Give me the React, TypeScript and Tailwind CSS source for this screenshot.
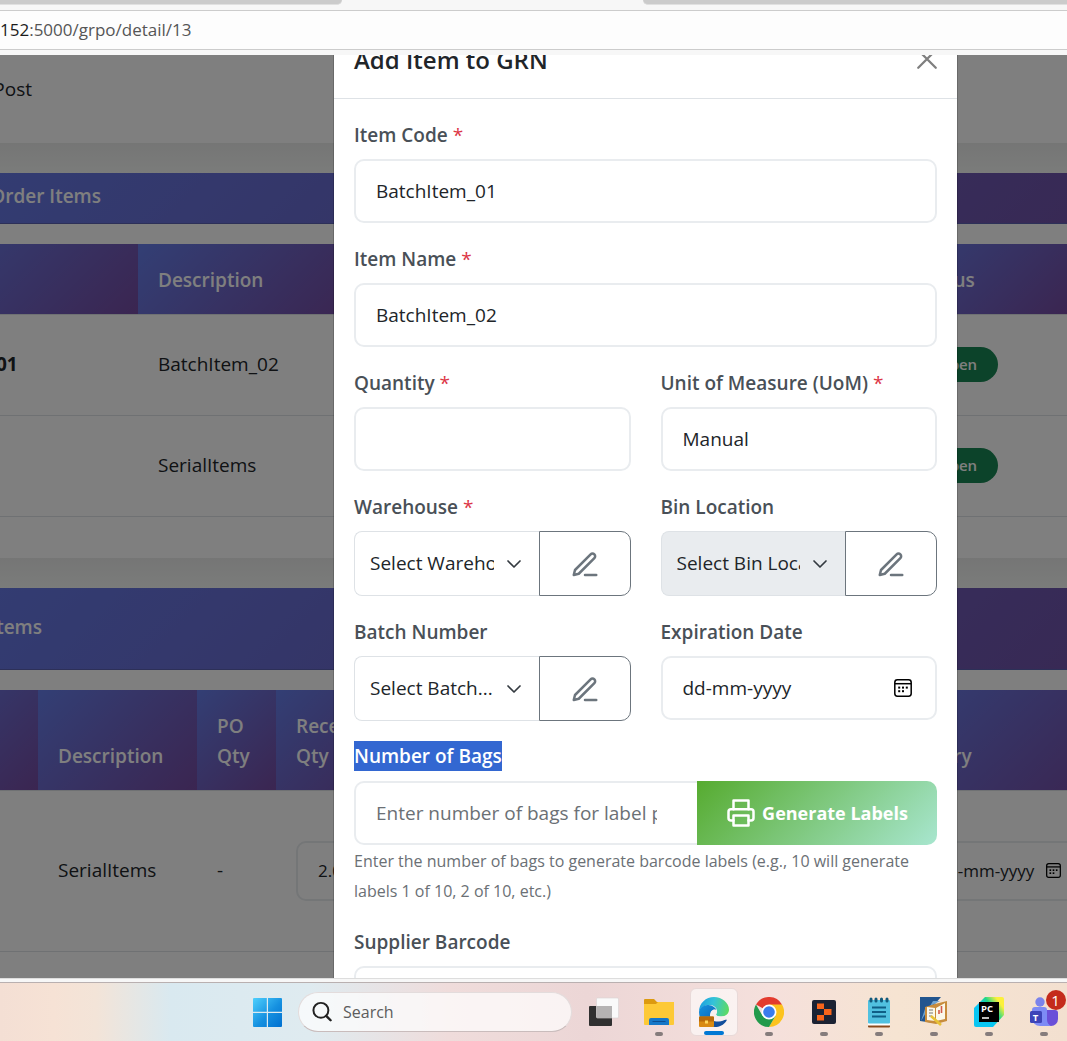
import type { ReactNode } from "react";

const FONT = "font-['Open_Sans','Noto_Sans',sans-serif]";
const BRAND = "bg-[linear-gradient(135deg,#667eea_0%,#764ba2_100%)]";
const BANNER = "bg-[linear-gradient(135deg,#6678e4_0%,#7053aa_100%)]";
const INPUT =
  "w-full min-w-0 h-16 rounded-[10px] border-2 border-[#e9ecef] bg-white px-5 text-[19px] text-[#212529] outline-none placeholder:text-[#6b7075]";

function PencilIcon() {
  return (
    <svg viewBox="0 0 24 24" className="size-[30px]" fill="none" stroke="currentColor" strokeWidth="2" strokeLinecap="round" strokeLinejoin="round">
      <path d="M12 20h9" />
      <path d="M16.5 3.5a2.121 2.121 0 0 1 3 3L7 19l-4 1 1-4L16.5 3.5z" />
    </svg>
  );
}

function PrinterIcon() {
  return (
    <svg viewBox="0 0 24 24" className="size-[30px]" fill="none" stroke="currentColor" strokeWidth="2" strokeLinecap="round" strokeLinejoin="round">
      <polyline points="6 9 6 2 18 2 18 9" />
      <path d="M6 18H4a2 2 0 0 1-2-2v-5a2 2 0 0 1 2-2h16a2 2 0 0 1 2 2v5a2 2 0 0 1-2 2h-2" />
      <rect x="6" y="14" width="12" height="8" />
    </svg>
  );
}

function CalendarIcon({ className }: { className: string }) {
  return (
    <svg viewBox="0 0 18 18" className={className} fill="none" stroke="currentColor" strokeWidth="1.5">
      <rect x="0.8" y="0.8" width="16.4" height="16.4" rx="2.6" />
      <path d="M1 4.7h16" />
      <g fill="currentColor" stroke="none">
        <rect x="4.2" y="11.2" width="2" height="2" />
        <rect x="8" y="11.2" width="2" height="2" />
        <rect x="4.2" y="7.6" width="2" height="2" />
        <rect x="8" y="7.6" width="2" height="2" />
        <rect x="11.8" y="7.6" width="2" height="2" />
      </g>
    </svg>
  );
}

function Label({ htmlFor, required, children }: { htmlFor: string; required?: boolean; children: ReactNode }) {
  return (
    <label htmlFor={htmlFor} className="mb-2 block h-8 text-[19px] leading-8 font-semibold whitespace-nowrap text-[#495057]">
      {children}
      {required && <span className="font-normal text-[#dc3545]"> *</span>}
    </label>
  );
}

function PickField({ id, label, option, required, disabled }: { id: string; label: string; option: string; required?: boolean; disabled?: boolean }) {
  return (
    <div className="min-w-0">
      <Label htmlFor={id} required={required}>{label}</Label>
      <div className="flex h-[65px]">
        <div className="relative min-w-0 flex-1">
          <select
            id={id}
            disabled={disabled}
            className={`h-full w-full appearance-none rounded-l-lg border border-r-0 border-[#dee2e6] pr-[45px] pl-[15px] text-[19px] text-[#212529] opacity-100 outline-none ${disabled ? "bg-[#e9ecef]" : "bg-white"}`}
          >
            <option>{option}</option>
          </select>
          <svg viewBox="0 0 16 16" className="pointer-events-none absolute top-1/2 right-[17px] size-4 -translate-y-1/2" fill="none" stroke="#343a40" strokeWidth="1.7" strokeLinecap="round" strokeLinejoin="round">
            <path d="m2 5 6 6 6-6" />
          </svg>
        </div>
        <button type="button" aria-label={`Enter ${label} manually`} className="flex w-[92px] items-center justify-center rounded-r-[10px] border border-[#6c757d] pt-0.5 text-[#6c757d]">
          <PencilIcon />
        </button>
      </div>
    </div>
  );
}

function TableHead({ cells, className }: { cells: string[]; className: string }) {
  return (
    <thead>
      <tr className={className}>
        {cells.map((c, i) => (
          <th key={i} className={`${BRAND} border-b border-[#dee2e6] px-5 pb-[19px] text-left align-bottom text-[19px] leading-[30px] font-semibold text-white`}>
            {c}
          </th>
        ))}
      </tr>
    </thead>
  );
}

function Shadow() {
  return <div className="h-[30px] shrink-0 bg-[linear-gradient(180deg,#ebeceb,#f6f8f6)]" />;
}

function PageBehind() {
  return (
    <div className="flex h-full flex-col bg-white text-[19px] text-[#212529]">
      <div className="h-[88px] shrink-0 pt-[19px]">
        <p className="flex w-8 justify-end leading-[30px]">Post</p>
      </div>
      <Shadow />
      <section className="h-[385px] shrink-0">
        <h2 className={`${BANNER} h-[51px] border-b border-[#5a60b0] pt-2`}>
          <span className="flex w-[101px] justify-end leading-[30px] font-semibold whitespace-nowrap text-white">Order Items</span>
        </h2>
        <table className="mt-5 -ml-20 w-[calc(100%+80px)] table-fixed border-collapse">
          <colgroup>
            <col className="w-[218px]" />
            <col className="w-[212px]" />
            <col />
            <col className="w-[170px]" />
          </colgroup>
          <TableHead cells={["", "Description", "", "Status"]} className="h-[70px]" />
          <tbody>
            {[
              ["01", "BatchItem_02"],
              ["", "SerialItems"],
            ].map(([code, name]) => (
              <tr key={name} className="h-[101px] border-b border-[#dee2e6]">
                <td className="pl-[76px] font-bold">{code}</td>
                <td className="px-5">{name}</td>
                <td />
                <td className="px-5">
                  <span className="flex h-[35px] w-[81px] items-center justify-center rounded-full bg-[#198754] text-[15px] font-semibold text-white">Open</span>
                </td>
              </tr>
            ))}
          </tbody>
        </table>
      </section>
      <Shadow />
      <section className="shrink-0">
        <h2 className={`${BANNER} flex h-[82px] items-center border-b border-[#5a60b0] pb-1`}>
          <span className="flex w-[42px] justify-end leading-[30px] font-semibold text-white">Items</span>
        </h2>
        <table className="mt-5 -ml-20 w-[calc(100%+116px)] table-fixed border-collapse">
          <colgroup>
            <col className="w-[118px]" />
            <col className="w-[159px]" />
            <col className="w-[79px]" />
            <col className="w-[120px]" />
            <col />
            <col className="w-[208px]" />
          </colgroup>
          <TableHead cells={["", "Description", "PO Qty", "Received Qty", "", "Expiry"]} className="h-[100px]" />
          <tbody>
            <tr className="h-[161px] border-b border-[#dee2e6]">
              <td />
              <td className="px-5">SerialItems</td>
              <td className="px-5">-</td>
              <td className="px-5">
                <input aria-label="Received quantity" defaultValue="2.000" className="h-[60px] w-full rounded-[10px] border-2 border-[#e9ecef] px-5 text-[17px]" />
              </td>
              <td />
              <td className="px-5">
                <div className="flex h-[60px] items-center justify-between rounded-[10px] border-2 border-[#e9ecef] px-5">
                  <input aria-label="Expiry date" placeholder="dd-mm-yyyy" className="w-[104px] text-[17px] outline-none placeholder:text-[#212529]" />
                  <CalendarIcon className="size-[15px] text-black" />
                </div>
              </td>
            </tr>
          </tbody>
        </table>
      </section>
    </div>
  );
}

function Modal() {
  return (
    <div role="dialog" aria-label="Add Item to GRN" className="flex-1 bg-white shadow-[0_0_0_1px_rgba(0,0,0,0.17)]">
      <header className="flex h-11 items-start justify-between border-b border-[#dee2e6] px-5">
        <h1 className="-mt-3 text-2xl leading-[34px] font-semibold text-[#212529]">Add Item to GRN</h1>
        <button type="button" aria-label="Close" className="-mt-1.5 size-5 text-[#7f7f7f]">
          <svg viewBox="0 0 16 16" className="size-5" fill="none" stroke="currentColor" strokeWidth="1.8" strokeLinecap="round">
            <path d="M1 1l14 14M15 1L1 15" />
          </svg>
        </button>
      </header>
      <form className="grid grid-cols-2 gap-x-[30px] gap-y-5 p-5" onSubmit={(e) => e.preventDefault()}>
        <div className="col-span-2">
          <Label htmlFor="code" required>Item Code</Label>
          <input id="code" defaultValue="BatchItem_01" className={INPUT} />
        </div>
        <div className="col-span-2">
          <Label htmlFor="name" required>Item Name</Label>
          <input id="name" defaultValue="BatchItem_02" className={INPUT} />
        </div>
        <div>
          <Label htmlFor="qty" required>Quantity</Label>
          <input id="qty" className={INPUT} />
        </div>
        <div>
          <Label htmlFor="uom" required>Unit of Measure (UoM)</Label>
          <input id="uom" defaultValue="Manual" className={INPUT} />
        </div>
        <PickField id="warehouse" label="Warehouse" option="Select Warehouse..." required />
        <PickField id="bin" label="Bin Location" option="Select Bin Location..." disabled />
        <PickField id="batch" label="Batch Number" option="Select Batch..." />
        <div>
          <Label htmlFor="expiry">Expiration Date</Label>
          <div className="relative">
            <input id="expiry" placeholder="dd-mm-yyyy" className={`${INPUT} placeholder:text-[#212529]`} />
            <button type="button" aria-label="Open calendar" className="absolute top-[23px] right-[25px] text-black">
              <CalendarIcon className="size-[18px]" />
            </button>
          </div>
        </div>
        <div className="col-span-2">
          <label htmlFor="bags" className="mb-2.5 block w-fit bg-[#3367d1] text-[19px] leading-[30px] font-semibold text-white">
            Number of Bags
          </label>
          <div className="flex">
            <input
              id="bags"
              placeholder="Enter number of bags for label printing"
              className="h-16 min-w-0 flex-1 rounded-l-[10px] border-2 border-r-0 border-[#e9ecef] pr-10 pl-5 text-[19px] outline-none placeholder:text-[#6b7075]"
            />
            <button type="button" className="flex w-60 items-center justify-center gap-1.5 rounded-r-[10px] bg-[linear-gradient(135deg,#56ab2f_0%,#a8e6cf_100%)] text-[18px] font-bold text-white">
              <PrinterIcon />
              Generate Labels
            </button>
          </div>
          <p className="mt-px text-[16px] leading-[30px] text-[#6b7075]">
            Enter the number of bags to generate barcode labels (e.g., 10 will generate labels 1 of 10, 2 of 10, etc.)
          </p>
        </div>
        <div className="col-span-2">
          <Label htmlFor="supplier">Supplier Barcode</Label>
          <input id="supplier" className={INPUT} />
        </div>
      </form>
    </div>
  );
}

function StartIcon() {
  return (
    <svg viewBox="0 0 29 29" className="size-[29px]">
      <defs>
        <linearGradient id="win" x1="0" y1="0" x2="29" y2="29" gradientUnits="userSpaceOnUse">
          <stop offset="0" stopColor="#4fd0fd" />
          <stop offset="0.55" stopColor="#1590e0" />
          <stop offset="1" stopColor="#0070d0" />
        </linearGradient>
      </defs>
      <path fill="url(#win)" d="M1 0h12.8v13.8H0V1a1 1 0 0 1 1-1zM15 0h13a1 1 0 0 1 1 1v12.8H15zM0 15h13.8v14H1a1 1 0 0 1-1-1zM15 15h14v13a1 1 0 0 1-1 1H15z" />
    </svg>
  );
}

function TaskViewIcon() {
  return (
    <svg viewBox="0 0 30 30" className="size-[30px]">
      <rect x="0" y="9" width="23" height="20" rx="1" fill="#303030" />
      <rect x="7.5" y="1" width="22" height="20" rx="1" fill="#fafafa" stroke="#d8d4d4" strokeWidth="0.6" />
      <path d="M8 9h15v12H8z" fill="#b5b3b3" />
    </svg>
  );
}

function FolderIcon() {
  return (
    <svg viewBox="0 0 30 28" className="h-7 w-[30px]">
      <path d="M0 2a1 1 0 0 1 1-1h9l3 3h16a1 1 0 0 1 1 1v6H0z" fill="#dc9a10" />
      <path d="M0 6h12l2-2h16v22a1 1 0 0 1-1 1H1a1 1 0 0 1-1-1z" fill="#fdc936" />
      <path d="M5 27v-5a2 2 0 0 1 2-2h16a2 2 0 0 1 2 2v5z" fill="#1577c8" />
      <path d="M8.500 23.500h13" stroke="#0b4f93" strokeWidth="1" />
    </svg>
  );
}

function EdgeIcon() {
  return (
    <svg viewBox="0 0 30 30" className="size-[30px]">
      <defs>
        <linearGradient id="edgeTop" x1="0" y1="6" x2="30" y2="14" gradientUnits="userSpaceOnUse">
          <stop offset="0" stopColor="#1c9ee0" />
          <stop offset="0.45" stopColor="#35c3d8" />
          <stop offset="1" stopColor="#5fdc5c" />
        </linearGradient>
        <linearGradient id="edgeLow" x1="0" y1="10" x2="16" y2="28" gradientUnits="userSpaceOnUse">
          <stop offset="0" stopColor="#1590dc" />
          <stop offset="1" stopColor="#0b5eb5" />
        </linearGradient>
      </defs>
      <path d="M0 15C0 6 7 0 15 0s15 6 15 12.500c0 4-3 7-8 7-3.500 0-5-1-5-2 0-1 1.500-1.500 1-4C17.500 10 14 8 10 8 5 8 1 11 0 15z" fill="url(#edgeTop)" />
      <path d="M0 15c.5-4.500 5-7.500 9.500-7 4 .3 7 2.500 8 5-3-1.500-6.500 1-6.500 5.500 0 6 4 9.500 9 10C11 32 0 26 0 15z" fill="url(#edgeLow)" />
      <path d="M11 18.500c0 5 5 6.500 9 6 3-.3 5-1.500 7-2 .8 0 1 .5.500 1.200C25 28 20 30 16 30 11 29 9 23 11 18.500z" fill="#124f9c" />
      <path d="M12.500 14.500c1.500-2.500 5.500-2 5.500.5 0 1.200-1 2-.8 2.800.3 1.400 3 2 6 1.700 2 0 3 .5 4.500 2-3 2.500-8 3-11 1.500-3.500-1.500-5.500-5.500-4.200-8.500z" fill="#f9efee" />
      <rect x="0" y="19.500" width="15" height="10.500" rx="1" fill="#d98a12" />
      <path d="M0 20.500a1 1 0 0 1 1-1h13a1 1 0 0 1 1 1v4H0z" fill="#b86a0a" />
      <rect x="6" y="23.500" width="3" height="3" fill="#ffd65a" />
    </svg>
  );
}

function ChromeIcon() {
  return (
    <svg viewBox="0 0 48 48" className="size-[30px]">
      <path d="M24 24 3.200 12A24 24 0 0 1 44.800 12z" fill="#e33b2e" />
      <path d="M24 12h20.800A24 24 0 0 1 24 48l10.400-18z" fill="#fcc31e" />
      <path d="M3.200 12 13.600 30 34.400 30 24 48A24 24 0 0 1 3.200 12z" fill="#229a4b" />
      <circle cx="24" cy="24" r="12" fill="#fff" />
      <circle cx="24" cy="24" r="9.300" fill="#3a7cec" />
    </svg>
  );
}

function BlocksIcon() {
  return (
    <svg viewBox="0 0 24 24" className="size-6">
      <rect width="24" height="24" rx="2" fill="#1b2233" />
      <path d="M5 3.500h7v5.500H5zM12 9h7.500v6H12zM5 15h7v5.500H5z" fill="#f8641a" />
    </svg>
  );
}

function NotepadIcon() {
  return (
    <svg viewBox="0 0 24 31" className="h-[31px] w-6">
      <rect x="1" y="27" width="22" height="3.500" rx="1" fill="#8a4a1c" />
      <rect x="1" y="25" width="22" height="3.500" fill="#fff" />
      <rect x="1" y="3" width="22" height="23.500" rx="1" fill="#51c1e0" />
      <path d="M5 10.500h14M5 15h14M5 19.500h14" stroke="#0f5f86" strokeWidth="1.800" />
      <path d="M4 2v2M9 2v2M14.500 2v2M20 2v2" stroke="#125a7c" strokeWidth="3" strokeLinecap="round" />
    </svg>
  );
}

function BookIcon() {
  return (
    <svg viewBox="0 0 30 30" className="size-[30px]">
      <path d="M1 0h21l-7 8v18L1 24z" fill="#21558f" />
      <path d="M2 24 14 4h7L6 12z" fill="#6fa4d0" />
      <path d="M6 10 16 7l12-3v20l-11 3-11-2z" fill="#c78c3c" />
      <path d="m8 10 8 1v13l-8-1zM17 11l9-5v16l-9 2z" fill="#fbf8ea" />
      <path d="M10 13h4M10 16h4M10 19h3" stroke="#777" strokeWidth="1" />
      <path d="M20 17v-4M22.500 16V9" stroke="#d25a4c" strokeWidth="1.600" />
      <path d="m12 19 10 9" stroke="#e8c236" strokeWidth="2.600" />
    </svg>
  );
}

function PyCharmIcon() {
  return (
    <svg viewBox="0 0 30 30" className="size-[30px]">
      <defs>
        <linearGradient id="pc" x1="6" y1="18" x2="27" y2="3" gradientUnits="userSpaceOnUse">
          <stop offset="0.25" stopColor="#09c6f2" />
          <stop offset="0.55" stopColor="#21d789" />
          <stop offset="0.9" stopColor="#fcf03a" />
        </linearGradient>
      </defs>
      <path d="M11 0h17a2 2 0 0 1 2 2v16L19 30H2a2 2 0 0 1-2-2V11z" fill="url(#pc)" />
      <rect x="5" y="5" width="20" height="20" fill="#000" />
      <path d="M8 21h7" stroke="#fff" strokeWidth="1.500" />
      <text x="7" y="14.500" fontSize="9.500" fontWeight="700" fill="#fff">PC</text>
    </svg>
  );
}

function TeamsIcon() {
  return (
    <svg viewBox="0 0 30 30" className="size-[30px]">
      <circle cx="11" cy="5" r="4.700" fill="#7b83eb" />
      <path d="M17 13h9a3 3 0 0 1 3 3v6a7 7 0 0 1-7 7h-5z" fill="#6a4fd8" />
      <path d="M3 13a3 3 0 0 1 3-3h9a3 3 0 0 1 3 3v10c0 3 2 5 4 6H11a8 8 0 0 1-8-8z" fill="#7d8bf5" />
      <rect x="1" y="14" width="12" height="12" rx="1.500" fill="#3d44b8" />
      <text x="3.800" y="23.500" fontSize="9.500" fontWeight="700" fill="#fff">T</text>
    </svg>
  );
}

const APPS = [
  { name: "Task view", icon: <TaskViewIcon />, mark: "none" },
  { name: "File Explorer", icon: <FolderIcon />, mark: "open" },
  { name: "Edge", icon: <EdgeIcon />, mark: "active" },
  { name: "Chrome", icon: <ChromeIcon />, mark: "open" },
  { name: "Blocks", icon: <BlocksIcon />, mark: "open" },
  { name: "Notepad", icon: <NotepadIcon />, mark: "open" },
  { name: "Registry", icon: <BookIcon />, mark: "open" },
  { name: "PyCharm", icon: <PyCharmIcon />, mark: "open" },
  { name: "Teams", icon: <TeamsIcon />, mark: "open", badge: "1" },
];

function Taskbar() {
  return (
    <nav className="flex h-[59px] shrink-0 items-center overflow-hidden border-t border-[#b9b0b0] bg-[linear-gradient(90deg,#f4dfd4_0%,#f6e2d5_5%,#f3e4d8_9%,#d9e9f0_16%,#dfebf0_29%,#efdcdb_42%,#ecd6d6_55%,#f5e0dc_72%,#f6e4d2_84%,#f3e0d0_100%)] pl-[253px]">
      <button type="button" aria-label="Start" className="shrink-0">
        <StartIcon />
      </button>
      <label className="ml-4 flex h-10 w-[274px] shrink-0 items-center gap-2.5 rounded-full border border-b-[#c9bcbc] border-[#e3dcdc] bg-white/70 pl-3">
        <svg viewBox="0 0 20 20" className="size-[22px]" fill="none" stroke="#222" strokeWidth="1.800" strokeLinecap="round">
          <circle cx="9" cy="8.500" r="6.800" />
          <path d="m13.800 13.500 4 4" strokeWidth="2.200" />
        </svg>
        <input aria-label="Search" placeholder="Search" className="min-w-0 flex-1 bg-transparent text-[16px] outline-none placeholder:text-[#5c5c5c]" />
      </label>
      <div className="ml-1 flex">
        {APPS.map((app) => (
          <button
            key={app.name}
            type="button"
            aria-label={app.name}
            className="flex w-[55px] shrink-0 justify-center"
          >
            <span
              className={`relative flex h-12 w-12 items-center justify-center rounded-md ${app.mark === "active" ? "border border-[#e8d9d8] bg-white/60" : ""}`}
            >
              {app.icon}
              {app.mark === "open" && <span className="absolute bottom-0 h-1 w-2 rounded-full bg-[#857c7c]" />}
              {app.mark === "active" && <span className="absolute bottom-0 h-1 w-5 rounded-full bg-[#0078d4]" />}
              {app.badge && (
                <span className="absolute top-0.5 left-[26px] flex size-5 items-center justify-center rounded-full bg-[#c42b1c] text-[15px] text-white">{app.badge}</span>
              )}
            </span>
          </button>
        ))}
      </div>
    </nav>
  );
}

export default function App() {
  return (
    <div className={`${FONT} flex h-screen flex-col overflow-hidden bg-[#f7f7f7]`}>
      <div className="flex h-[5px] shrink-0 justify-between">
        <div className="w-[342px] rounded-br-md border-b border-[#e0e0e0] bg-[#cbcbcb]" />
        <div className="w-[424px] rounded-bl-md border-b border-[#e0e0e0] bg-[#cbcbcb]" />
      </div>
      <div className="mt-[5px] flex h-10 shrink-0 items-center border-y border-[#cccccc] bg-[#fdfdfd] text-[17px] text-[#555555]">
        <span className="text-[#1b1b1b]">152</span>:5000/grpo/detail/13
      </div>
      <main className="relative mt-[5px] min-h-0 flex-1 overflow-hidden">
        <PageBehind />
        <div className="absolute inset-0 flex items-start overflow-hidden bg-black/50 pr-[110px] pl-[334px]">
          <Modal />
        </div>
      </main>
      <div className="h-1 shrink-0 border-t border-[#dddddd] bg-[#f7f7f7]" />
      <Taskbar />
    </div>
  );
}
